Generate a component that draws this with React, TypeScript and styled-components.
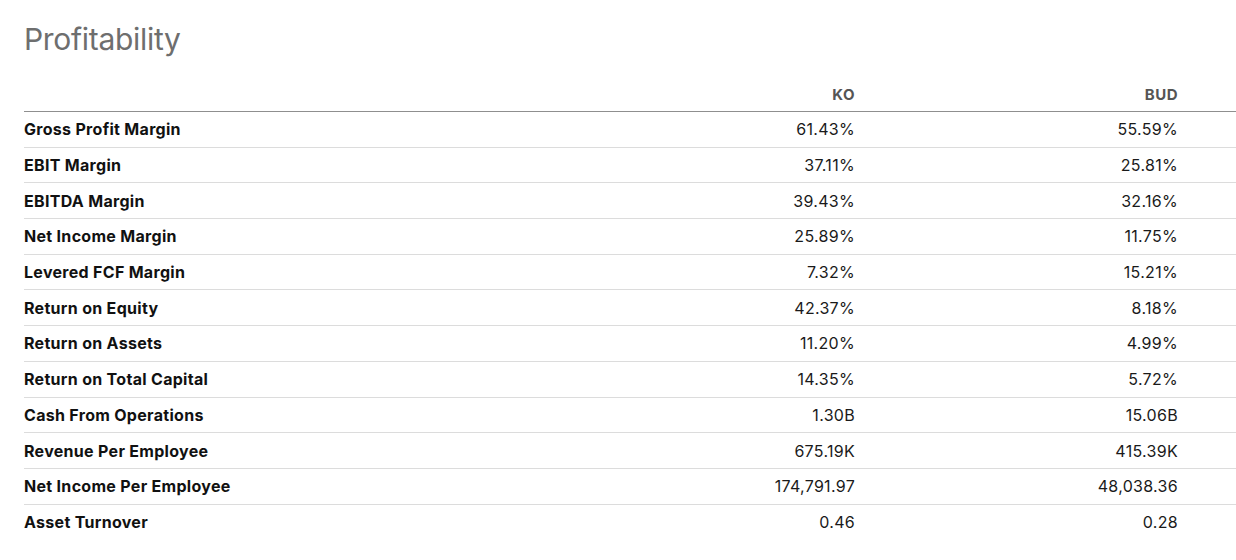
import React from "react";
import styled, { createGlobalStyle } from "styled-components";

const Global = createGlobalStyle`
  html, body { margin: 0; padding: 0; background: #fff; }
  body { font-family: Inter, "Noto Sans", "Liberation Sans", sans-serif; color: #111; }
`;

const Page = styled.div`
  padding: 20px 0 0 24px;
  width: 1212px;
`;

const Title = styled.h2`
  margin: 0 0 21px 0;
  font-size: 30px;
  line-height: 38px;
  font-weight: 400;
  color: #6e6e6e;
  letter-spacing: -0.3px;
`;

const Row = styled.div<{ $head?: boolean; $last?: boolean }>`
  display: grid;
  grid-template-columns: 1fr 300px 323px 58px;
  align-items: center;
  height: ${(p) => (p.$head ? "33px" : "35.7px")};
  box-sizing: border-box;
  border-bottom: ${(p) =>
    p.$last ? "none" : `1px solid ${p.$head ? "#8f8f8f" : "#dcdcdc"}`};
`;

const Label = styled.div`
  font-size: 16px;
  letter-spacing: 0.3px;
  font-weight: 700;
  color: #111;
`;

const Value = styled.div`
  font-size: 16px;
  letter-spacing: 0.3px;
  font-weight: 400;
  color: #1a1a1a;
  text-align: right;
`;

const Head = styled.div`
  font-size: 15px;
  letter-spacing: 0.5px;
  font-weight: 700;
  color: #555;
  text-align: right;
  margin-top: -1px;
`;

const rows: [string, string, string][] = [
  ["Gross Profit Margin", "61.43%", "55.59%"],
  ["EBIT Margin", "37.11%", "25.81%"],
  ["EBITDA Margin", "39.43%", "32.16%"],
  ["Net Income Margin", "25.89%", "11.75%"],
  ["Levered FCF Margin", "7.32%", "15.21%"],
  ["Return on Equity", "42.37%", "8.18%"],
  ["Return on Assets", "11.20%", "4.99%"],
  ["Return on Total Capital", "14.35%", "5.72%"],
  ["Cash From Operations", "1.30B", "15.06B"],
  ["Revenue Per Employee", "675.19K", "415.39K"],
  ["Net Income Per Employee", "174,791.97", "48,038.36"],
  ["Asset Turnover", "0.46", "0.28"],
];

export default function App() {
  return (
    <Page>
      <Global />
      <Title>Profitability</Title>
      <Row $head>
        <span />
        <Head>KO</Head>
        <Head>BUD</Head>
        <span />
      </Row>
      {rows.map(([l, a, b], i) => (
        <Row key={l} $last={i === rows.length - 1}>
          <Label>{l}</Label>
          <Value>{a}</Value>
          <Value>{b}</Value>
          <span />
        </Row>
      ))}
    </Page>
  );
}
